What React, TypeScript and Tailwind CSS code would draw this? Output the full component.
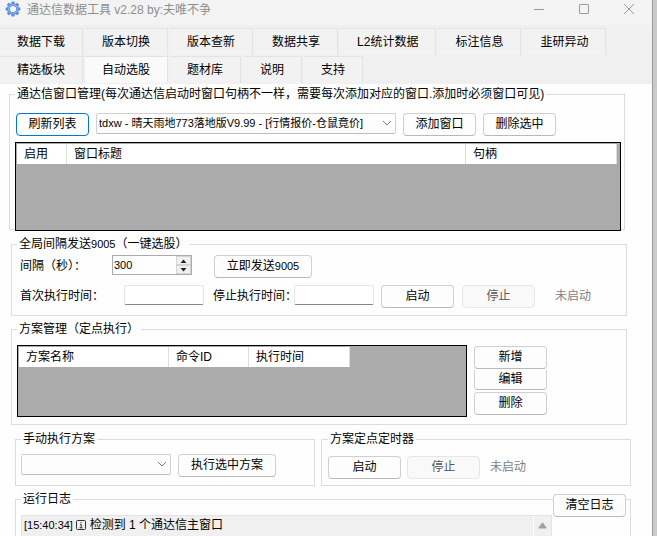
import React from 'react';
import clsx from 'clsx';

const TAB_ROWS = [
  ['数据下载', '版本切换', '版本查新', '数据共享', 'L2统计数据', '标注信息', '韭研异动'],
  ['精选板块', '自动选股', '题材库', '说明', '支持'],
];

const ACTIVE_TAB = '自动选股';

const GEAR_TEETH = [0, 45, 90, 135, 180, 225, 270, 315];

interface ButtonProps extends React.ButtonHTMLAttributes<HTMLButtonElement> {
  primary?: boolean;
}

const Button: React.FC<ButtonProps> = ({ primary, className, children, ...rest }) => (
  <button
    type="button"
    className={clsx(
      'h-[23px] shrink-0 rounded border bg-[#fdfdfd] text-center leading-[21px] whitespace-nowrap',
      primary ? 'border-[#0078d4]' : 'border-[#d0d0d0] border-b-[#b9b9b9]',
      'disabled:border-[#e6e6e6] disabled:bg-[#f9f9f9] disabled:text-[#555555]',
      className ?? 'w-[73px]'
    )}
    {...rest}
  >
    {children}
  </button>
);

interface GroupProps {
  title: React.ReactNode;
  className?: string;
  children: React.ReactNode;
}

const Group: React.FC<GroupProps> = ({ title, className, children }) => (
  <fieldset className={clsx('min-w-0 border border-[#dcdcdc]', className)}>
    <legend className="px-0.5 leading-4 whitespace-nowrap">{title}</legend>
    {children}
  </fieldset>
);

interface ComboProps {
  label: string;
  options: string[];
  className?: string;
}

const Combo: React.FC<ComboProps> = ({ label, options, className }) => (
  <div className={clsx('relative h-[21px] shrink-0', className)}>
    <select
      aria-label={label}
      className="h-full w-full appearance-none rounded-xs border border-[#d0d0d0] border-b-[#bcbcbc] bg-[#fdfdfd] pr-4 pl-0.5 text-[11px] leading-[19px]"
    >
      {options.map((o) => (
        <option key={o}>{o}</option>
      ))}
    </select>
    <svg
      className="pointer-events-none absolute top-1.5 right-1 h-2 w-2.5"
      viewBox="0 0 10 8"
      fill="none"
      stroke="#777777"
    >
      <path d="M1 2l4 4 4-4" />
    </svg>
  </div>
);

const TimeInput: React.FC<{ id: string }> = ({ id }) => (
  <input
    id={id}
    type="text"
    className="h-5 w-20 shrink-0 rounded-xs border border-[#e6e6e6] border-b-[#868686] bg-white px-1"
  />
);

const TitleBar = () => (
  <header className="flex h-[25px] shrink-0 items-start bg-[#f3f3f3] pt-px pl-[5px] text-[#8e8e8e]">
    <svg className="mr-1.5 h-4 w-4" viewBox="0 0 16 16">
      {GEAR_TEETH.map((angle) => (
        <path
          key={angle}
          d="M6 3.4L6.7 0.6h2.6L10 3.4z"
          fill="#5b8fe0"
          transform={`rotate(${angle} 8 8)`}
        />
      ))}
      <circle cx="8" cy="8" r="4.4" fill="#f3f6fb" stroke="#5488dc" strokeWidth="2.6" />
      <circle cx="8" cy="8" r="4.4" fill="none" stroke="#8fb8f2" strokeWidth="1.2" />
    </svg>
    <h1 className="flex-1 leading-[18px]">通达信数据工具 v2.28 by:夫唯不争</h1>
    <div className="flex gap-[23px] pr-3">
      <button type="button" aria-label="最小化" className="px-[5px] pt-0.5">
        <svg className="h-3 w-3" viewBox="0 0 12 12" stroke="#999999">
          <path d="M1 6.5h10" />
        </svg>
      </button>
      <button type="button" aria-label="最大化" className="px-[5px] pt-0.5">
        <svg className="h-3 w-3" viewBox="0 0 12 12" fill="none" stroke="#999999">
          <rect x="1.5" y="1.5" width="9" height="9" rx="0.5" />
        </svg>
      </button>
      <button type="button" aria-label="关闭" className="px-[5px] pt-0.5">
        <svg className="h-3 w-3" viewBox="0 0 12 12" stroke="#999999">
          <path d="M1 1l10 10M11 1L1 11" />
        </svg>
      </button>
    </div>
  </header>
);

const Tabs = () => (
  <nav role="tablist" className="flex shrink-0 flex-col gap-px bg-[#f0f0f0] pt-[3px] pb-px">
    {TAB_ROWS.map((row) => (
      <div key={row[0]} className="flex gap-0.5">
        {row.map((name) => (
          <button
            key={name}
            type="button"
            role="tab"
            aria-selected={name === ACTIVE_TAB}
            className={clsx(
              'h-[27px] border-t border-r border-[#e3e3e3] px-[17px] leading-[26px] whitespace-nowrap',
              name === ACTIVE_TAB ? 'bg-[#fafafa]' : 'bg-[#f2f2f2]'
            )}
          >
            {name}
          </button>
        ))}
      </div>
    ))}
  </nav>
);

const TH = 'h-5 border-r border-[#dedede] bg-white pl-[7px] text-left font-normal leading-5';

const WindowGroup = () => (
  <Group
    title="通达信窗口管理(每次通达信启动时窗口句柄不一样，需要每次添加对应的窗口.添加时必须窗口可见)"
    className="mr-[27px] ml-[9px] h-[144px] pr-[3px] pl-[5px]"
  >
    <div className="flex gap-[7px] pt-[11px] pl-px">
      <Button primary>刷新列表</Button>
      <Combo
        label="通达信窗口"
        className="w-[300px]"
        options={['tdxw - 晴天雨地773落地版V9.99 - [行情报价-仓鼠竟价]']}
      />
      <Button>添加窗口</Button>
      <Button>删除选中</Button>
    </div>
    <div className="mt-[6px] h-[89px] border border-black bg-[#ababab] pt-px pr-[3px] pl-px">
      <table className="w-full table-fixed border-separate border-spacing-0">
        <thead>
          <tr>
            <th className={clsx(TH, 'w-[50px]')}>启用</th>
            <th className={TH}>窗口标题</th>
            <th className={clsx(TH, 'w-[151px]')}>句柄</th>
          </tr>
        </thead>
      </table>
    </div>
  </Group>
);

const IntervalGroup = () => (
  <Group
    title={
      <>
        全局间隔发送<span className="text-[11px]">9005</span>（一键选股）
      </>
    }
    className="mt-1.5 mr-[25px] ml-[11px] h-20 pr-2 pl-[5px]"
  >
    <div className="flex items-start pt-[3px] pl-[3px]">
      <label htmlFor="interval" className="w-[92px] leading-[23px]">
        间隔（秒）：
      </label>
      <div className="flex h-5 w-20 border border-[#ababab]">
        <input
          id="interval"
          type="number"
          defaultValue={300}
          className="min-w-0 flex-1 appearance-none pl-px text-[11px] leading-[18px] [-moz-appearance:textfield] [&::-webkit-inner-spin-button]:appearance-none"
        />
        <div className="flex w-[15px] flex-col bg-[#f0f0f0]">
          <button type="button" aria-label="增加" className="flex h-[9px] items-center justify-center border border-[#d4d4d4]">
            <svg className="h-1 w-[7px]" viewBox="0 0 7 4">
              <path d="M0.5 4L3.5 0.5 6.5 4z" fill="#222222" />
            </svg>
          </button>
          <button type="button" aria-label="减少" className="flex h-[9px] items-center justify-center border border-[#d4d4d4]">
            <svg className="h-1 w-[7px]" viewBox="0 0 7 4">
              <path d="M0.5 0L3.5 3.5 6.5 0z" fill="#222222" />
            </svg>
          </button>
        </div>
      </div>
      <Button className="ml-[22px] w-[98px]">
        立即发送<span className="text-[11px]">9005</span>
      </Button>
    </div>
    <div className="mt-[7px] flex items-start">
      <label htmlFor="start-time" className="w-[107px] pl-[3px] leading-[23px] whitespace-nowrap">
        首次执行时间：
      </label>
      <TimeInput id="start-time" />
      <label htmlFor="stop-time" className="ml-[9px] w-[81px] leading-[23px] whitespace-nowrap">
        停止执行时间：
      </label>
      <TimeInput id="stop-time" />
      <Button className="ml-[7px] w-[73px]">启动</Button>
      <Button className="ml-2 w-[73px]" disabled>
        停止
      </Button>
      <span className="ml-5 leading-[23px] text-[#808080]">未启动</span>
    </div>
  </Group>
);

const PlanGroup = () => (
  <Group
    title="方案管理（定点执行）"
    className="mt-[5px] mr-[25px] ml-[11px] h-[104px] pr-2 pl-[5px]"
  >
    <div className="flex pt-2">
      <div className="h-[72px] w-[450px] border border-black bg-[#ababab] pt-px pl-px">
        <table className="w-[331px] table-fixed border-separate border-spacing-0">
          <thead>
            <tr>
              <th className={clsx(TH, 'w-[150px]')}>方案名称</th>
              <th className={clsx(TH, 'w-20')}>命令ID</th>
              <th className={TH}>执行时间</th>
            </tr>
          </thead>
        </table>
      </div>
      <div className="ml-[7px] flex flex-col pt-px">
        <Button>新增</Button>
        <button
          type="button"
          className="mt-px h-5 w-[73px] rounded-b border border-t-0 border-[#d0d0d0] border-b-[#b9b9b9] bg-[#fdfdfd] leading-[19px]"
        >
          编辑
        </button>
        <Button className="mt-0.5 w-[73px]">删除</Button>
      </div>
    </div>
  </Group>
);

const LogGroup = () => (
  <div className="relative mt-[5px] mr-[21px] ml-[15px] shrink-0">
    <Group title="运行日志" className="min-h-[140px] pr-[78px] pl-[5px]">
      <div className="mt-2 flex h-[110px] border border-[#e3e3e3] bg-[#f0f0f0]">
        <div role="log" className="flex-1 pl-0.5 leading-[18px]">
          <span className="text-[11px]">[15:40:34]</span>{' '}
          <svg className="inline h-2.5 w-2.5 align-[-1px]" viewBox="0 0 10 10" fill="none" stroke="#333333">
            <rect x="0.5" y="0.5" width="9" height="9" rx="1" />
            <path d="M5 2v1.2M4 4.5h1.2v3.3M3.6 7.8h3" />
          </svg>{' '}
          检测到 1 个通达信主窗口
        </div>
        <button
          type="button"
          aria-label="向上滚动"
          className="flex w-[18px] justify-center border-l border-white pt-1.5"
        >
          <svg className="h-[7px] w-[9px]" viewBox="0 0 9 7">
            <path d="M4.5 0.8L8.2 6H0.8z" fill="#a0a0a0" stroke="#a0a0a0" strokeLinejoin="round" />
          </svg>
        </button>
      </div>
    </Group>
    <Button className="absolute top-[3px] right-[5px] w-[73px]">清空日志</Button>
  </div>
);

export default function App() {
  return (
    <div className="flex h-screen overflow-hidden bg-[#c9c9c9] text-xs text-black font-['Liberation_Sans','Noto_Sans_CJK_SC',sans-serif]">
      <div className="flex min-w-0 flex-1 flex-col rounded-tr-md bg-[#fefefe]">
        <TitleBar />
        <Tabs />
        <main className="flex flex-col pt-0.5">
          <WindowGroup />
          <IntervalGroup />
          <PlanGroup />
          <div className="mt-1.5 mr-[21px] ml-[15px] grid grid-cols-[300fr_310fr] gap-1.5">
            <Group title="手动执行方案" className="h-[55px] pl-[5px]">
              <div className="flex gap-[7px] pt-[7px]">
                <Combo label="方案" className="w-[150px]" options={['']} />
                <Button className="w-[98px]">执行选中方案</Button>
              </div>
            </Group>
            <Group title="方案定点定时器" className="h-[55px] pl-1.5">
              <div className="flex gap-1.5 pt-[9px]">
                <Button>启动</Button>
                <Button disabled>停止</Button>
                <span className="ml-1 leading-[23px] text-[#808080]">未启动</span>
              </div>
            </Group>
          </div>
          <LogGroup />
        </main>
      </div>
      <div className="w-[5px] border-l border-[#9c9c9c] bg-[#c9c9c9]" />
    </div>
  );
}
